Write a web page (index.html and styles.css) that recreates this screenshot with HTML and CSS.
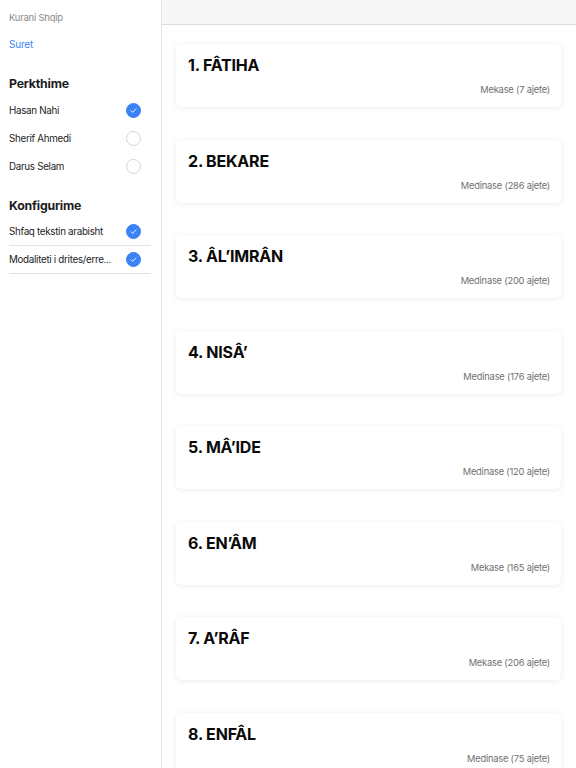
FILE: index.html
```html
<!DOCTYPE html>
<html>
<head>
<meta charset="utf-8">
<link rel="stylesheet" href="styles.css">
</head>
<body>
<div class="app">
  <aside class="sidebar">
    <div class="app-title">Kurani Shqip</div>
    <div class="nav-link">Suret</div>
    <h2 class="section-title first">Perkthime</h2>
    <div class="row"><span>Hasan Nahi</span><span class="check on"><svg viewBox="0 0 16 16"><path d="M5 8.3l2 2 4-4.3"/></svg></span></div>
    <div class="row"><span>Sherif Ahmedi</span><span class="check"></span></div>
    <div class="row"><span>Darus Selam</span><span class="check"></span></div>
    <h2 class="section-title">Konfigurime</h2>
    <div class="row sep"><span>Shfaq tekstin arabisht</span><span class="check on"><svg viewBox="0 0 16 16"><path d="M5 8.3l2 2 4-4.3"/></svg></span></div>
    <div class="row sep"><span>Modaliteti i drites/erre...</span><span class="check on"><svg viewBox="0 0 16 16"><path d="M5 8.3l2 2 4-4.3"/></svg></span></div>
  </aside>
  <main class="main">
    <div class="topbar"></div>
    <div class="list">
      <div class="card"><div class="card-title">1. FÂTIHA</div><div class="card-sub">Mekase (7 ajete)</div></div>
      <div class="card"><div class="card-title">2. BEKARE</div><div class="card-sub">Medinase (286 ajete)</div></div>
      <div class="card"><div class="card-title">3. ÂL’IMRÂN</div><div class="card-sub">Medinase (200 ajete)</div></div>
      <div class="card"><div class="card-title">4. NISÂ’</div><div class="card-sub">Medinase (176 ajete)</div></div>
      <div class="card"><div class="card-title">5. MÂ’IDE</div><div class="card-sub">Medinase (120 ajete)</div></div>
      <div class="card"><div class="card-title">6. EN’ÂM</div><div class="card-sub">Mekase (165 ajete)</div></div>
      <div class="card"><div class="card-title">7. A’RÂF</div><div class="card-sub">Mekase (206 ajete)</div></div>
      <div class="card"><div class="card-title">8. ENFÂL</div><div class="card-sub">Medinase (75 ajete)</div></div>
    </div>
  </main>
</div>
</body>
</html>
```
FILE: styles.css
```css
* { box-sizing: border-box; }
html, body { margin: 0; padding: 0; }
body {
  font-family: Inter, "Liberation Sans", sans-serif;
  color: #1c1c1e;
  background: #fff;
  width: 576px;
  height: 768px;
  overflow: hidden;
}
.app { display: flex; height: 768px; }
.sidebar {
  width: 162px;
  flex: none;
  border-right: 1px solid #e3e3e3;
  padding: 12px 10px 0 9px;
  background: #fff;
}
.app-title { font-size: 9.5px; line-height: 12px; color: #8a8a8a; letter-spacing: -0.25px; }
.nav-link { font-size: 10px; line-height: 14px; color: #3b82f6; margin-top: 13px; letter-spacing: -0.2px; }
.section-title {
  font-size: 12.3px;
  font-weight: 700;
  line-height: 16px;
  margin: 18px 0 4px;
  color: #1c1c1e;
  letter-spacing: -0.2px;
}
.section-title.first { margin-top: 25px; }
.row {
  display: flex;
  align-items: center;
  justify-content: space-between;
  height: 28px;
  font-size: 9.8px;
  letter-spacing: -0.3px;
  color: #1c1c1e;
  padding-right: 10px;
}
.row.sep { border-bottom: 1px solid #e2e2e2; }
.row:first-of-type { }
.check {
  width: 15px;
  height: 15px;
  border-radius: 50%;
  border: 1px solid #d4d4d6;
  display: flex;
  align-items: center;
  justify-content: center;
}
.check.on { background: #3b82f6; border-color: #3b82f6; }
.check svg { width: 13px; height: 13px; fill: none; stroke: #fff; stroke-width: 1.1; stroke-linecap: round; stroke-linejoin: round; }
.main { flex: 1; display: flex; flex-direction: column; background: #fff; }
.topbar { height: 25px; flex: none; background: #f7f7f7; border-bottom: 1px solid #dcdcdc; }
.list {
  display: flex;
  flex-direction: column;
  gap: 32.5px;
  padding: 19px 15px 0 14px;
}
.card {
  height: 63px;
  flex: none;
  background: #fff;
  border-radius: 5px;
  box-shadow: 0 1px 6px rgba(0,0,0,0.08);
  padding: 11px 11px 0 12px;
  display: flex;
  flex-direction: column;
}
.card-title { font-size: 16px; font-weight: 700; line-height: 20px; color: #0a0a0a; letter-spacing: -0.2px; }
.card-sub { font-size: 9.3px; line-height: 12px; color: #6f6f6f; text-align: right; margin-top: 9px; letter-spacing: -0.2px; }
```
